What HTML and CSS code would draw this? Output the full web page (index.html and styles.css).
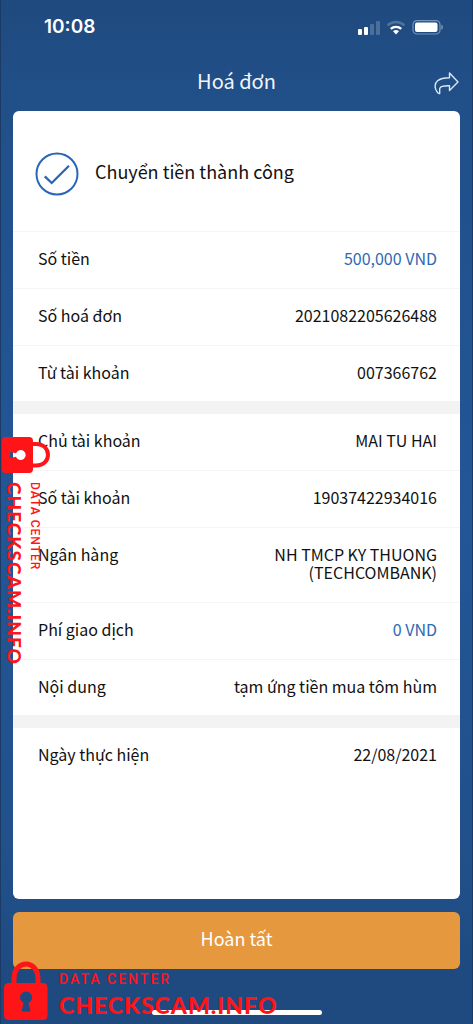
FILE: index.html
```html
<!DOCTYPE html>
<html lang="vi">
<head>
<meta charset="utf-8">
<meta name="viewport" content="width=device-width, initial-scale=1">
<title>Hoá đơn</title>
<link rel="stylesheet" href="styles.css">
</head>
<body>
<div class="screen">
  <div class="status">
    <span class="clock">10:08</span>
    <svg class="status-icons" width="86" height="16" viewBox="0 0 86 16" aria-hidden="true">
      <g fill="#fff">
        <rect x="1" y="10" width="4" height="6" rx="1"/>
        <rect x="7" y="8" width="4" height="8" rx="1"/>
        <g opacity=".2"><rect x="13" y="5" width="4" height="11" rx="1"/><rect x="19" y="2" width="4" height="14" rx="1"/></g>
        <path d="M39 15.500l-3-3.200a4.400 4.400 0 0 1 6 0z"/>
      </g>
      <path d="M33.800 9.900a7.600 7.600 0 0 1 10.400 0" fill="none" stroke="#fff" stroke-width="2.400"/>
      <path d="M30.600 6.300a12.400 12.400 0 0 1 16.800 0" fill="none" stroke="#fff" stroke-width="2.400" opacity=".22"/>
      <rect x="56" y="1.600" width="27" height="13.400" rx="4" fill="none" stroke="#fff" stroke-width="1.200" opacity=".4"/>
      <rect x="58" y="3.500" width="22.500" height="9.600" rx="2" fill="#fff"/>
      <path d="M84.400 5.800c2 .8 2 4.200 0 5z" fill="#fff" opacity=".45"/>
    </svg>
  </div>
  <header class="topbar">
    <h1 class="title">Hoá đơn</h1>
    <button class="share" type="button" aria-label="Chia sẻ">
      <svg width="26" height="24" viewBox="0 0 26 24" fill="none" stroke="#dce6f2" stroke-width="1.400" stroke-linejoin="round"><path d="M15.500 2L24 11L15.500 19.600V14.800C10.500 14.700 6.300 14.700 5.700 17.600L5.700 22.600C4.300 23 3 21 1.700 18.200C-.7 11 4.500 6.800 15.500 6.700Z"/></svg>
    </button>
  </header>
  <main class="card">
    <div class="result">
      <svg class="tick" width="44" height="44" viewBox="0 0 44 44" fill="none" stroke="#2a66b5" aria-hidden="true"><circle cx="22" cy="22" r="20.500" stroke-width="2"/><path d="M9.800 24.300L16.700 31L34 13.800" stroke-width="2.300"/></svg>
      <h2 class="result-text">Chuyển tiền thành công</h2>
    </div>
    <dl class="group">
      <div class="row"><dt>Số tiền</dt><dd class="money">500,000 VND</dd></div>
      <div class="row"><dt>Số hoá đơn</dt><dd>2021082205626488</dd></div>
      <div class="row"><dt>Từ tài khoản</dt><dd>007366762</dd></div>
    </dl>
    <dl class="group">
      <div class="row"><dt>Chủ tài khoản</dt><dd>MAI TU HAI</dd></div>
      <div class="row"><dt>Số tài khoản</dt><dd>19037422934016</dd></div>
      <div class="row"><dt>Ngân hàng</dt><dd>NH TMCP KY THUONG<br>(TECHCOMBANK)</dd></div>
      <div class="row"><dt>Phí giao dịch</dt><dd class="money">0 VND</dd></div>
      <div class="row"><dt>Nội dung</dt><dd>tạm ứng tiền mua tôm hùm</dd></div>
    </dl>
    <dl class="group">
      <div class="row"><dt>Ngày thực hiện</dt><dd>22/08/2021</dd></div>
    </dl>
  </main>
  <button class="done" type="button">Hoàn tất</button>
  <div class="home-bar"></div>

  <div class="mark mark-side">
    <svg width="48" height="36" viewBox="0 0 48 36" aria-hidden="true"><path d="M30 7H34C50 7 50 28.500 34 28.500H30" fill="none" stroke="#ff1518" stroke-width="4"/><path fill="#ff1518" fill-rule="evenodd" d="M3 0H27Q31 0 31 4V32Q31 36 27 36H3Q0 36 0 32V4Q0 0 3 0ZM8 15V21L14 19.700A5 5 0 1 0 14 16.300Z"/></svg>
    <div class="mark-text"><span class="mark-small">DATA CENTER</span><span class="mark-big">CHECKSCAM.INFO</span></div>
  </div>
  <div class="mark mark-bottom">
    <svg width="44" height="60" viewBox="0 0 44 60" aria-hidden="true"><path d="M10 24V18C10 -2 34 -2 34 18V24" fill="none" stroke="#ff1518" stroke-width="5"/><path fill="#ff1518" fill-rule="evenodd" d="M5 22H39Q43.500 22 43.500 27V54Q43.500 59 39 59H5Q0 59 0 54V27Q0 22 5 22ZM17.500 50.500H26.500L24.500 42A6 6 0 1 0 19.500 42Z"/></svg>
    <div class="mark-text"><span class="mark-small">DATA CENTER</span><span class="mark-big">CHECKSCAM.INFO</span></div>
  </div>
</div>
</body>
</html>
```
FILE: styles.css
```css
* { box-sizing: border-box; }
body {
  margin: 0;
  font-family: "Noto Sans CJK SC", "Noto Sans", sans-serif;
  font-size: 16px;
  line-height: 18px;
  color: #111;
}
h1, h2, dl, dt, dd { margin: 0; font-weight: 400; }
button { border: 0; font: inherit; cursor: pointer; }
.screen {
  position: relative;
  min-height: 100vh;
  display: flex;
  flex-direction: column;
  padding: 0 12px 9px;
  background: linear-gradient(#1f4a7f, #215089 11%, #235697 50%, #215089 85%, #1e4a80 95%);
  border-left: 1px solid #1b3a66;
  border-right: 1px solid #1b3a66;
}
.status {
  display: flex;
  justify-content: space-between;
  align-items: center;
  height: 54px;
  padding: 0 17px 0 31px;
}
.clock {
  font-family: Inter, sans-serif;
  font-weight: 600;
  font-size: 19px;
  color: #fff;
}
.topbar {
  display: grid;
  grid-template-columns: 26px 1fr 26px;
  align-items: center;
  height: 57px;
}
.title {
  grid-column: 2;
  padding-bottom: 4px;
  text-align: center;
  font-size: 20px;
  line-height: 24px;
  color: #f2f6fb;
}
.share { padding: 0; background: none; height: 24px; }
.share svg { display: block; }
.card {
  flex: 1;
  background: #fff;
  border-radius: 6px;
  overflow: hidden;
}
.result {
  display: flex;
  align-items: center;
  gap: 16px;
  height: 121px;
  padding: 6px 22px 0;
  border-bottom: 1px solid #f5f5f6;
}
.result-text { padding-bottom: 6px; font-size: 18px; line-height: 24px; }
.group + .group { border-top: 13px solid #f3f3f3; }
.row {
  display: flex;
  justify-content: space-between;
  gap: 16px;
  padding: 17px 23px 21px 25px;
  border-bottom: 1px solid #f5f5f6;
}
.row:last-child { padding-bottom: 20px; border-bottom: 0; }
.row dd { text-align: right; }
.row .money { color: #3069b3; }
.done {
  height: 57px;
  margin-top: 13px;
  padding: 0 0 6px;
  border-radius: 6px;
  background: #e6983f;
  color: #fff;
  font-size: 18px;
}
.home-bar {
  width: 170px;
  height: 5px;
  margin: 41px auto 0;
  border-radius: 3px;
  background: #fff;
}
.mark {
  position: absolute;
  display: flex;
  color: #ff1518;
  pointer-events: none;
}
.mark svg { flex: none; }
.mark-text { display: flex; flex-direction: column; }
.mark-small { font-family: Roboto, sans-serif; font-weight: 500; letter-spacing: 2px; }
.mark-big { font-family: Lato, sans-serif; font-weight: 900; letter-spacing: 1px; }
.mark-bottom { left: 3px; bottom: 2px; gap: 11px; }
.mark-bottom .mark-text { padding-top: 9px; }
.mark-bottom .mark-small { font-size: 14px; line-height: 18px; }
.mark-bottom .mark-big { font-size: 23px; line-height: 34px; }
.mark-side { left: 1px; top: 437px; flex-direction: column; gap: 9px; }
.mark-side .mark-text { writing-mode: vertical-rl; width: 40px; }
.mark-side .mark-small { font-size: 12px; line-height: 14px; letter-spacing: 1px; }
.mark-side .mark-big { font-size: 19px; line-height: 28px; }
```
